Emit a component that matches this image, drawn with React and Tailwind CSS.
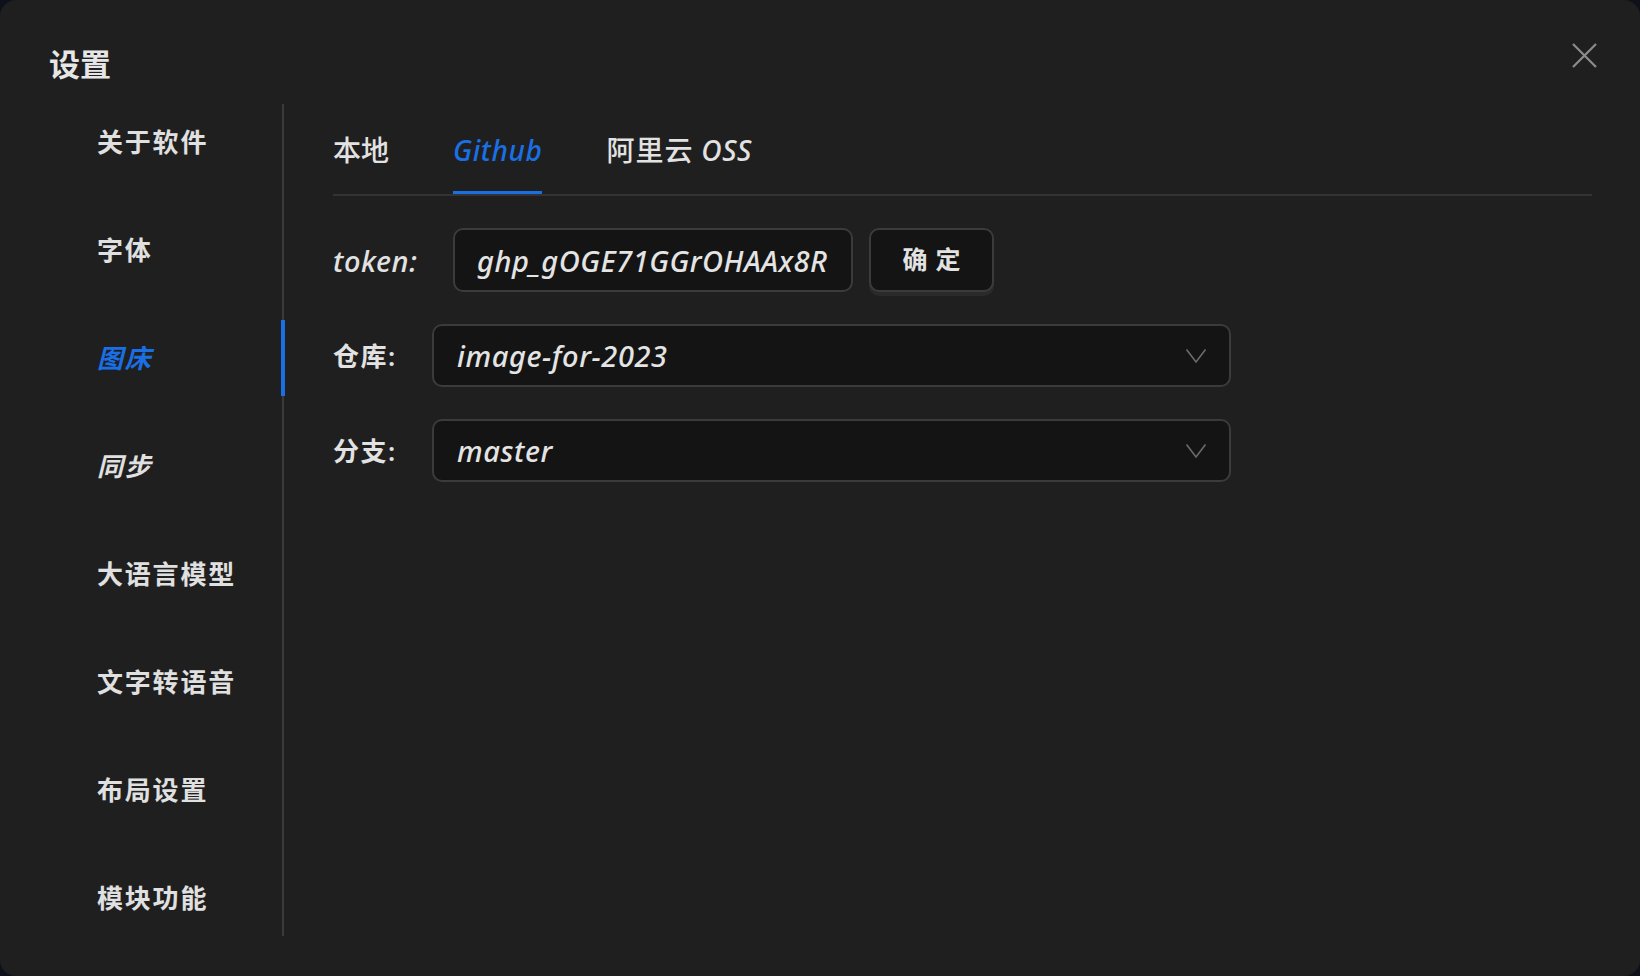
import React, { useState } from 'react';

const font = "font-['Noto_Sans','Noto_Sans_CJK_SC',sans-serif]";

const menuItems = [
  { label: '关于软件' },
  { label: '字体' },
  { label: '图床', italic: true },
  { label: '同步', italic: true },
  { label: '大语言模型' },
  { label: '文字转语音' },
  { label: '布局设置' },
  { label: '模块功能' },
];

const tabs = ['本地', 'Github', '阿里云 OSS'];

const Chevron = () => (
  <svg width="22" height="16" viewBox="0 0 22 16" fill="none" className="shrink-0">
    <path d="M1.5 1.5 L11 14 L20.5 1.5" stroke="#6b6b6b" strokeWidth="1.6" />
  </svg>
);

// 下拉选择框
const SelectBox = ({ value }) => (
  <div className="w-[799px] h-[63px] flex items-center justify-between pl-[23px] pr-[22px] bg-[#141414] border-2 border-[#3b3b3b] rounded-[10px]">
    <span className="text-[29px] font-medium italic tracking-[0.6px] text-[#e4e4e4] leading-none">{value}</span>
    <Chevron />
  </div>
);

const App = () => {
  const [active, setActive] = useState(2);
  const [tab, setTab] = useState(1);

  return (
    <div className={`w-full h-[976px] bg-[#0e101b] ${font}`}>
      <div className="h-full rounded-[16px] bg-[#1f1f1f] flex flex-col relative">
        {/* 标题 */}
        <div className="h-[104px] pl-[49px] pt-[43px]">
          <h1 className="text-[31px] font-bold leading-[42px] text-[#e6e6e6]">设置</h1>
        </div>
        <button className="absolute top-[42px] right-[42px] w-[27px] h-[27px] flex items-center justify-center">
          <svg width="27" height="27" viewBox="0 0 27 27">
            <path d="M2 2 L25 25 M25 2 L2 25" stroke="#8c8c8c" strokeWidth="2.2" />
          </svg>
        </button>

        <div className="flex h-[832px]">
          {/* 侧边菜单 */}
          <div className="w-[284px] shrink-0 border-r-2 border-[#3a3a3a] flex flex-col gap-[32px]">
            {menuItems.map((item, i) => (
              <div
                key={item.label}
                onClick={() => setActive(i)}
                className="relative h-[76px] flex items-center pl-[97px] cursor-pointer"
              >
                <span
                  className={`text-[26px] font-semibold tracking-[1.8px] leading-none ${item.italic ? 'italic' : ''} ${
                    active === i ? 'text-[#1b6fe4]' : 'text-[#e0e0e0]'
                  }`}
                >
                  {item.label}
                </span>
                {active === i && (
                  <div className="absolute right-[-3px] top-0 h-full w-[4px] bg-[#1b6fe4]" />
                )}
              </div>
            ))}
          </div>

          {/* 内容区 */}
          <div className="flex-1 pl-[49px] pr-[48px]">
            <div className="flex gap-[64px] border-b-2 border-[#333333] h-[92px]">
              {tabs.map((t, i) => (
                <div
                  key={t}
                  onClick={() => setTab(i)}
                  className={`h-full flex items-center pt-[4px] border-b-[3px] -mb-[2px] cursor-pointer text-[28px] font-medium leading-none ${
                    tab === i ? 'border-[#1b6fe4] text-[#1b6fe4]' : 'border-transparent text-[#e2e2e2]'
                  } ${i === 0 ? '' : 'italic tracking-[0.6px]'}`}
                >
                  {t === '阿里云 OSS' ? (
                    <span>
                      <span className="not-italic tracking-[1px]">阿里云</span> OSS
                    </span>
                  ) : (
                    t
                  )}
                </div>
              ))}
            </div>

            <div className="flex flex-col gap-[32px] pt-[32px]">
              <div className="flex items-center h-[64px]">
                <span className="w-[120px] text-[29px] font-medium italic tracking-[0.6px] text-[#e2e2e2] leading-none">token:</span>
                <div className="w-[400px] h-[64px] flex items-center pl-[22px] pr-[20px] bg-[#141414] border-2 border-[#3b3b3b] rounded-[10px] overflow-hidden">
                  <span className="text-[29px] font-medium italic tracking-[0.5px] text-[#e4e4e4] whitespace-nowrap leading-none">
                    ghp_gOGE71GGrOHAAx8R
                  </span>
                </div>
                <button className="ml-[16px] w-[125px] h-[64px] flex items-center justify-center bg-[#141414] border-2 border-[#3b3b3b] rounded-[10px] shadow-[0_4px_0_0_#2a2a2a] text-[25px] font-semibold text-[#e2e2e2] tracking-[8px] pl-[8px]">
                  确定
                </button>
              </div>

              <div className="flex items-center">
                <span className="w-[99px] text-[26px] font-semibold text-[#e2e2e2] leading-none tracking-[1.5px]">仓库:</span>
                <SelectBox value="image-for-2023" />
              </div>

              <div className="flex items-center">
                <span className="w-[99px] text-[26px] font-semibold text-[#e2e2e2] leading-none tracking-[1.5px]">分支:</span>
                <SelectBox value="master" />
              </div>
            </div>
          </div>
        </div>
      </div>
    </div>
  );
};

export default App;
